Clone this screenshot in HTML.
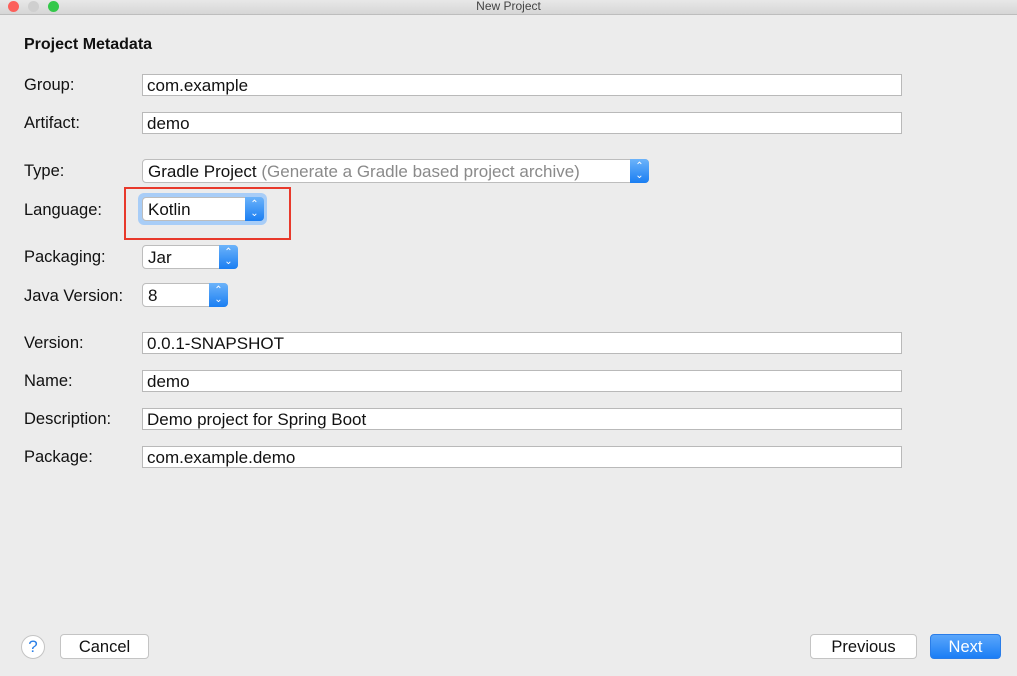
<!DOCTYPE html><html><head><style>
body{margin:0;width:1017px;height:676px;background:#ececec;font-family:"Liberation Sans",sans-serif;font-size:17px;color:#111;position:relative;overflow:hidden}
.t{position:absolute;left:0;top:0;width:1017px;height:14px;background:linear-gradient(#e8e8e8,#d6d6d6);border-bottom:1px solid #bdbdbd;font-size:12px;text-align:center;line-height:13px;color:#444}
.d{position:absolute;top:1px;width:11px;height:11px;border-radius:50%}
.a{position:absolute}
.l{position:absolute;left:24px;font-size:16.5px}
.f{position:absolute;left:142px;width:754px;height:20px;background:#fff;border:1px solid #b9b9b9;padding-left:4px;line-height:22px}
.s{position:absolute;left:142px;background:#fff;border:1px solid #bdbdbd;border-radius:4px;padding-left:5px;line-height:24px;box-sizing:border-box;height:24px}
.s i{position:absolute;right:-1px;top:-1px;width:19px;height:24px;background:linear-gradient(#6cb3fa,#1a7ef2);border-radius:0 4px 4px 0;color:#fff;font-style:normal;font-size:10px;line-height:9px;text-align:center;padding-top:3px;box-sizing:border-box}
.b{position:absolute;top:634px;height:25px;background:#fff;border:1px solid #c4c4c4;border-radius:4px;box-sizing:border-box;text-align:center;line-height:24px;font-size:16.5px}
</style></head><body>
<div class="t">New Project</div>
<div class="d" style="left:8px;background:#fc605b"></div><div class="d" style="left:28px;background:#cfcfcf"></div><div class="d" style="left:48px;background:#34c84a"></div>
<div class="a" style="left:24px;top:36px;font-weight:bold;font-size:16px">Project Metadata</div>
<div class="l" style="top:76px">Group:</div><div class="f" style="top:74px">com.example</div>
<div class="l" style="top:114px">Artifact:</div><div class="f" style="top:112px">demo</div>
<div class="l" style="top:162px">Type:</div><div class="s" style="top:159px;width:507px">Gradle Project <span style="color:#8a8a8a">(Generate a Gradle based project archive)</span><i>⌃<br>⌄</i></div>
<div class="l" style="top:201px">Language:</div>
<div class="a" style="left:138px;top:193px;width:129px;height:32px;background:#a8cdf7;border-radius:6px"></div>
<div class="s" style="top:197px;width:122px">Kotlin<i>⌃<br>⌄</i></div>
<div class="a" style="left:124px;top:187px;width:163px;height:49px;border:2px solid #e8392b"></div>
<div class="l" style="top:248px">Packaging:</div><div class="s" style="top:245px;width:96px">Jar<i>⌃<br>⌄</i></div>
<div class="l" style="top:287px">Java Version:</div><div class="s" style="top:283px;width:86px">8<i>⌃<br>⌄</i></div>
<div class="l" style="top:334px">Version:</div><div class="f" style="top:332px">0.0.1-SNAPSHOT</div>
<div class="l" style="top:372px">Name:</div><div class="f" style="top:370px">demo</div>
<div class="l" style="top:410px">Description:</div><div class="f" style="top:408px">Demo project for Spring Boot</div>
<div class="l" style="top:448px">Package:</div><div class="f" style="top:446px">com.example.demo</div>
<div class="a" style="left:21px;top:635px;width:24px;height:24px;border-radius:50%;background:#fff;border:1px solid #c4c4c4;box-sizing:border-box;text-align:center;line-height:22px;color:#2a7fe6">?</div>
<div class="b" style="left:60px;width:89px">Cancel</div>
<div class="b" style="left:810px;width:107px">Previous</div>
<div class="b" style="left:930px;width:71px;background:linear-gradient(#5aa6fb,#1b7ef5);border-color:#2a7de8;color:#fff">Next</div>
</body></html>
